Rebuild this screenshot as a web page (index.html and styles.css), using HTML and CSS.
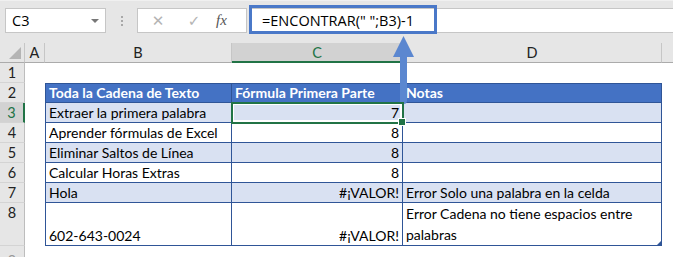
FILE: index.html
```html
<!DOCTYPE html>
<html lang="es">
<head>
    <meta charset="UTF-8">
    <title>ENCONTRAR - primera palabra</title>
    <link rel="stylesheet" href="styles.css">
</head>
<body>

<div class="app">

    <!-- Name box + formula bar -->
    <div class="topbar">
        <div class="namebox">
            <span>C3</span>
            <span class="caret"></span>
        </div>
        <div class="grip"><i></i><i></i><i></i></div>
        <div class="fxbox">
            <span class="btn">&#x2715;</span>
            <span class="btn">&#x2713;</span>
            <span class="fx">fx</span>
        </div>
        <div class="formula">=ENCONTRAR(" ";B3)-1</div>
    </div>

    <!-- Worksheet -->
    <div class="sheet">
        <div class="corner"><span class="tri"></span></div>
        <div class="colhead">A</div>
        <div class="colhead">B</div>
        <div class="colhead active">C</div>
        <div class="colhead">D</div>
        <div class="colhead last"></div>

        <div class="rowhead">1</div>
        <div class="cell"></div><div class="cell"></div><div class="cell"></div><div class="cell"></div><div class="cell"></div>

        <div class="rowhead">2</div>
        <div class="cell"></div>
        <div class="cell t th first top">Toda la Cadena de Texto</div>
        <div class="cell t th top">Fórmula Primera Parte</div>
        <div class="cell t th top">Notas</div>
        <div class="cell"></div>

        <div class="rowhead active">3</div>
        <div class="cell"></div>
        <div class="cell t band first">Extraer la primera palabra</div>
        <div class="cell t band num selected">7</div>
        <div class="cell t band"></div>
        <div class="cell"></div>

        <div class="rowhead">4</div>
        <div class="cell"></div>
        <div class="cell t first">Aprender fórmulas de Excel</div>
        <div class="cell t num">8</div>
        <div class="cell t"></div>
        <div class="cell"></div>

        <div class="rowhead">5</div>
        <div class="cell"></div>
        <div class="cell t band first">Eliminar Saltos de Línea</div>
        <div class="cell t band num">8</div>
        <div class="cell t band"></div>
        <div class="cell"></div>

        <div class="rowhead">6</div>
        <div class="cell"></div>
        <div class="cell t first">Calcular Horas Extras</div>
        <div class="cell t num">8</div>
        <div class="cell t"></div>
        <div class="cell"></div>

        <div class="rowhead">7</div>
        <div class="cell"></div>
        <div class="cell t band first">Hola</div>
        <div class="cell t band num err">#¡VALOR!</div>
        <div class="cell t band">Error Solo una palabra en la celda</div>
        <div class="cell"></div>

        <div class="rowhead">8</div>
        <div class="cell"></div>
        <div class="cell t first">602-643-0024</div>
        <div class="cell t num err">#¡VALOR!</div>
        <div class="cell t wrap corner-mark">Error Cadena no tiene espacios entre palabras</div>
        <div class="cell"></div>

        <div class="rowhead nine">9</div>
        <div class="cell"></div><div class="cell"></div><div class="cell"></div><div class="cell"></div><div class="cell"></div>
    </div>

    <!-- Annotation: highlighted formula + arrow -->
    <div class="callout"></div>
    <svg class="arrow" width="26" height="72" viewBox="0 0 26 72">
        <rect x="10" y="14" width="7" height="56" rx="3.5" fill="#5b87d0"/>
        <polygon points="13.5,2 3,23 24,23" fill="#5b87d0"/>
    </svg>

</div>

</body>
</html>
```

FILE: styles.css
```css
body {
    margin: 0;
    background: #fff;
    font-family: Lato, "Open Sans", sans-serif;
    color: #000;
}

.app {
    position: relative;
    width: 673px;
    height: 257px;
    overflow: hidden;
}

/* ---- top bar ---- */

.topbar {
    display: flex;
    align-items: flex-start;
    height: 43px;
    padding-top: 7px;
    box-sizing: border-box;
    background: #e6e6e6;
    border-top: 1px solid #f0f0f0;
    font-family: "Open Sans", "Noto Sans", sans-serif;
    font-size: 14.5px;
}

.namebox {
    display: flex;
    align-items: center;
    justify-content: space-between;
    width: 101px;
    height: 25px;
    margin-left: 5px;
    padding: 0 6px 0 6px;
    box-sizing: border-box;
    background: #fff;
    border: 1px solid #c6c6c6;
}

.caret {
    width: 0;
    height: 0;
    border-left: 4px solid transparent;
    border-right: 4px solid transparent;
    border-top: 4px solid #777;
}

.grip {
    display: flex;
    flex-direction: column;
    align-items: center;
    gap: 2px;
    width: 31px;
    padding-top: 8px;
}

.grip i {
    width: 2px;
    height: 2px;
    background: #a8a8a8;
}

.fxbox {
    display: flex;
    align-items: center;
    width: 110px;
    height: 25px;
    box-sizing: border-box;
    background: #fff;
    border: 1px solid #c6c6c6;
}

.fxbox .btn {
    width: 36px;
    text-align: center;
    color: #b4b4b4;
    font-size: 15px;
    font-family: "DejaVu Sans", sans-serif;
}

.fxbox .btn:first-child {
    margin-left: 2px;
}

.fxbox .fx {
    margin-left: 4px;
    font-family: "Liberation Serif", serif;
    font-style: italic;
    font-size: 15px;
    color: #555;
}

.formula {
    flex: 1;
    height: 25px;
    margin-left: 2px;
    padding-left: 13px;
    box-sizing: border-box;
    background: #fff;
    border-top: 1px solid #c6c6c6;
    border-bottom: 1px solid #c6c6c6;
    line-height: 23px;
    white-space: pre;
}

/* ---- sheet grid ---- */

.sheet {
    display: grid;
    grid-template-columns: 25px 20px 187px 171px 259px 11px;
    grid-template-rows: 20px repeat(7, 20px) 43px 11px;
    font-size: 14px;
}

.corner,
.colhead {
    position: relative;
    background: #e6e6e6;
    border-bottom: 1px solid #ababab;
    border-right: 1px solid #c6c6c6;
    box-sizing: border-box;
    text-align: center;
    line-height: 19px;
    font-size: 14.5px;
    color: #222;
}

.colhead.active {
    background: #d2d2d2;
    border-bottom: 2px solid #217346;
    color: #217346;
}

.colhead.last {
    border-right: none;
}

.tri {
    position: absolute;
    right: 3px;
    bottom: 3px;
    width: 0;
    height: 0;
    border-left: 12px solid transparent;
    border-bottom: 12px solid #b4b4b4;
}

.rowhead {
    background: #e6e6e6;
    border-bottom: 1px solid #d4d4d4;
    border-right: 1px solid #bdbdbd;
    box-sizing: border-box;
    text-align: center;
    line-height: 19px;
    font-size: 14.5px;
    color: #222;
    overflow: hidden;
}

.rowhead.active {
    background: #d2d2d2;
    border-right: 2px solid #217346;
    color: #217346;
}

.rowhead.nine {
    border-bottom: none;
    line-height: 30px;
    color: #999;
}

.cell {
    display: flex;
    align-items: flex-end;
    padding: 0 3px 0;
    box-sizing: border-box;
    background: #fff;
    white-space: nowrap;
    line-height: 19px;
}

.cell.t {
    border-right: 1px solid #2f5597;
    border-bottom: 1px solid #2f5597;
}

.cell.first {
    border-left: 1px solid #2f5597;
}

.cell.top {
    border-top: 1px solid #2f5597;
}

.cell.th {
    background: #4472c4;
    color: #fff;
    font-weight: 700;
}

.cell.band {
    background: #d9e1f2;
}

.cell.num {
    justify-content: flex-end;
}

.cell.wrap {
    white-space: normal;
    line-height: 21px;
}

.cell.selected {
    position: relative;
    z-index: 1;
    outline: 2px solid #217346;
    outline-offset: -1px;
    box-shadow: inset 0 0 0 2px #fff;
}

.cell.selected::after {
    content: "";
    position: absolute;
    right: -4px;
    bottom: -4px;
    width: 6px;
    height: 6px;
    background: #217346;
    border: 1px solid #fff;
}

.corner-mark {
    position: relative;
}

.corner-mark::after {
    content: "";
    position: absolute;
    right: 0;
    bottom: 0;
    width: 0;
    height: 0;
    border-left: 4px solid transparent;
    border-bottom: 4px solid #2f5597;
}

/* ---- annotation overlay ---- */

.callout {
    position: absolute;
    left: 249px;
    top: 5px;
    width: 188px;
    height: 29px;
    box-sizing: border-box;
    border: 3px solid #4a78c8;
}

.arrow {
    position: absolute;
    left: 390px;
    top: 34px;
}
```
